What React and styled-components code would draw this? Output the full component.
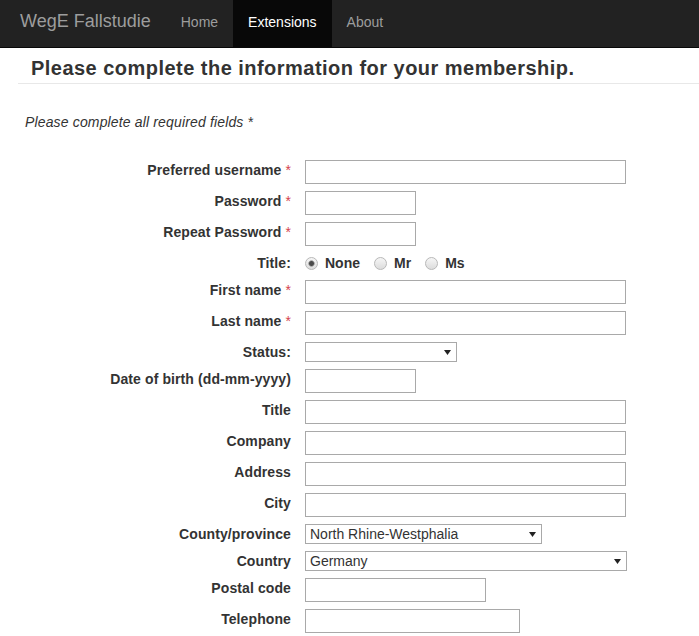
import React from "react";
import styled, { createGlobalStyle } from "styled-components";

const GlobalStyle = createGlobalStyle`
  html, body { margin: 0; padding: 0; background: #fff; }
  body {
    font-family: "Liberation Sans", Arial, Helvetica, sans-serif;
    font-size: 14px;
    line-height: 20px;
    color: #333;
  }
  * { box-sizing: border-box; }
`;

const Navbar = styled.nav`
  display: flex;
  align-items: stretch;
  height: 48px;
  background: #222;
  border-bottom: 1px solid #080808;
  padding-left: 5px;
`;

const Brand = styled.a`
  display: block;
  padding: 11px 15px 0;
  font-size: 18px;
  line-height: 20px;
  color: #9d9d9d;
  text-decoration: none;
`;

const NavList = styled.ul`
  display: flex;
  margin: 0;
  padding: 0;
  list-style: none;
`;

const NavLink = styled.a`
  display: block;
  height: 47px;
  padding: 12px 15px 0;
  font-size: 14px;
  line-height: 20px;
  color: ${(p) => (p.$active ? "#fff" : "#9d9d9d")};
  background: ${(p) => (p.$active ? "#080808" : "transparent")};
  text-decoration: none;
`;

const PageHeader = styled.div`
  margin-left: 18px;
  padding: 9px 0 4px 13px;
  border-bottom: 1px solid #e8e8e8;
`;

const Title = styled.h1`
  margin: 0;
  font-size: 20px;
  line-height: 22px;
  letter-spacing: 0.47px;
  font-weight: bold;
  color: #333;
`;

const Intro = styled.p`
  margin: 28px 0 0 25px;
  font-style: italic;
  line-height: 20px;
  letter-spacing: 0.15px;
`;

const Form = styled.form`
  margin: 28px 0 0 18px;
  display: flex;
  flex-direction: column;
  gap: 7px;
`;

const Row = styled.div`
  display: flex;
  align-items: flex-start;
`;

const Label = styled.label`
  width: 273px;
  flex: none;
  text-align: right;
  font-weight: bold;
  line-height: 20px;
  letter-spacing: 0.1px;
  color: #333;
  white-space: nowrap;
`;

const Req = styled.span`
  color: #d43f4f;
  font-weight: normal;
`;

const Control = styled.div`
  margin-left: 14px;
  display: flex;
  align-items: center;
`;

const TextInput = styled.input`
  width: ${(p) => p.$w}px;
  height: 24px;
  margin: 0;
  padding: 2px 4px;
  border: 1px solid #a9a9a9;
  border-radius: 0;
  font: 14px "Liberation Sans", Arial, sans-serif;
  color: #333;
  background: #fff;
  outline: none;
`;

const SelectWrap = styled.div`
  position: relative;
  width: ${(p) => p.$w}px;
  height: 20px;
`;

const Select = styled.select`
  appearance: none;
  -webkit-appearance: none;
  display: block;
  width: 100%;
  height: 20px;
  margin: 0;
  padding: 0 18px 0 4px;
  border: 1px solid #a9a9a9;
  border-radius: 0;
  background: #fff;
  font: 14px "Liberation Sans", Arial, sans-serif;
  line-height: 18px;
  color: #333;
  outline: none;
`;

const Arrow = styled.svg`
  position: absolute;
  right: 6px;
  top: 8px;
  width: 7px;
  height: 5px;
  pointer-events: none;
`;

const RadioGroup = styled.div`
  display: flex;
  align-items: center;
  gap: 14px;
  height: 20px;
`;

const RadioOption = styled.label`
  display: flex;
  align-items: center;
  gap: 7px;
  font-weight: bold;
  color: #333;
`;

const Radio = styled.input`
  appearance: none;
  -webkit-appearance: none;
  width: 13px;
  height: 13px;
  margin: 0;
  border-radius: 50%;
  border: 1px solid #b8b8b8;
  background: linear-gradient(#f6f6f6, #dcdcdc);
  &:checked {
    background: radial-gradient(circle at center, #4a4a4a 0 2px, #8a8a8a 2.6px, transparent 3.6px),
      linear-gradient(#f6f6f6, #dcdcdc);
  }
`;

function Dropdown({ w, value }) {
  return (
    <SelectWrap $w={w}>
      <Select defaultValue={value}>
        <option value={value}>{value}</option>
      </Select>
      <Arrow viewBox="0 0 7 5">
        <polygon points="0,0 7,0 3.5,5" fill="#222" />
      </Arrow>
    </SelectWrap>
  );
}

function Field({ label, req, children }) {
  return (
    <Row>
      <Label>
        {label}
        {req && <Req> *</Req>}
      </Label>
      <Control>{children}</Control>
    </Row>
  );
}

export default function App() {
  return (
    <>
      <GlobalStyle />
      <Navbar>
        <Brand href="#">WegE Fallstudie</Brand>
        <NavList>
          <li><NavLink href="#">Home</NavLink></li>
          <li><NavLink href="#" $active>Extensions</NavLink></li>
          <li><NavLink href="#">About</NavLink></li>
        </NavList>
      </Navbar>
      <PageHeader>
        <Title>Please complete the information for your membership.</Title>
      </PageHeader>
      <Intro>Please complete all required fields *</Intro>
      <Form onSubmit={(e) => e.preventDefault()}>
        <Field label="Preferred username" req><TextInput $w={321} /></Field>
        <Field label="Password" req><TextInput $w={111} type="password" /></Field>
        <Field label="Repeat Password" req><TextInput $w={111} type="password" /></Field>
        <Field label="Title:">
          <RadioGroup>
            <RadioOption><Radio type="radio" name="title" defaultChecked />None</RadioOption>
            <RadioOption><Radio type="radio" name="title" />Mr</RadioOption>
            <RadioOption><Radio type="radio" name="title" />Ms</RadioOption>
          </RadioGroup>
        </Field>
        <Field label="First name" req><TextInput $w={321} /></Field>
        <Field label="Last name" req><TextInput $w={321} /></Field>
        <Field label="Status:"><Dropdown w={152} value="" /></Field>
        <Field label="Date of birth (dd-mm-yyyy)"><TextInput $w={111} /></Field>
        <Field label="Title"><TextInput $w={321} /></Field>
        <Field label="Company"><TextInput $w={321} /></Field>
        <Field label="Address"><TextInput $w={321} /></Field>
        <Field label="City"><TextInput $w={321} /></Field>
        <Field label="County/province"><Dropdown w={237} value="North Rhine-Westphalia" /></Field>
        <Field label="Country"><Dropdown w={322} value="Germany" /></Field>
        <Field label="Postal code"><TextInput $w={181} /></Field>
        <Field label="Telephone"><TextInput $w={215} /></Field>
      </Form>
    </>
  );
}
